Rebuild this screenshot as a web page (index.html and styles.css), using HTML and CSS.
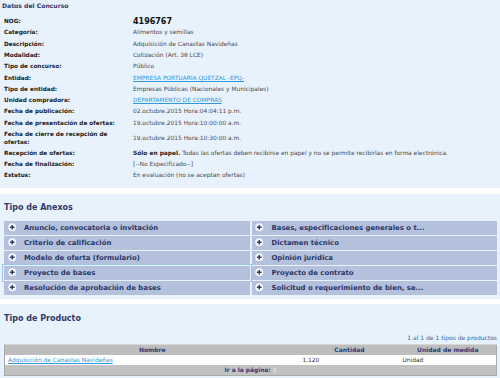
FILE: index.html
```html
<!DOCTYPE html>
<html lang="es">
<head>
    <meta charset="UTF-8">
    <title>Datos del Concurso</title>
    <link rel="stylesheet" href="styles.css">
</head>
<body>
    <section class="panel datos">
        <h2 class="datos-title">Datos del Concurso</h2>
        <table class="info">
            <tr><th>NOG:</th><td class="nog">4196767</td></tr>
            <tr><th>Categoría:</th><td>Alimentos y semillas</td></tr>
            <tr><th>Descripción:</th><td>Adquisición de Canastas Navideñas</td></tr>
            <tr><th>Modalidad:</th><td>Cotización (Art. 38 LCE)</td></tr>
            <tr><th>Tipo de concurso:</th><td>Público</td></tr>
            <tr><th>Entidad:</th><td><a href="#">EMPRESA PORTUARIA QUETZAL -EPQ-</a></td></tr>
            <tr><th>Tipo de entidad:</th><td>Empresas Públicas (Nacionales y Municipales)</td></tr>
            <tr><th>Unidad compradora:</th><td><a href="#">DEPARTAMENTO DE COMPRAS</a></td></tr>
            <tr><th>Fecha de publicación:</th><td>02.octubre.2015 Hora:04:04:11 p.m.</td></tr>
            <tr><th>Fecha de presentación de ofertas:</th><td>19.octubre.2015 Hora:10:00:00 a.m.</td></tr>
            <tr><th>Fecha de cierre de recepción de ofertas:</th><td>19.octubre.2015 Hora:10:30:00 a.m.</td></tr>
            <tr><th>Recepción de ofertas:</th><td><b>Sólo en papel.</b> Todas las ofertas deben recibirse en papel y no se permite recibirlas en forma electrónica.</td></tr>
            <tr><th>Fecha de finalización:</th><td>[--No Especificado--]</td></tr>
            <tr><th>Estatus:</th><td>En evaluación (no se aceptan ofertas)</td></tr>
        </table>
    </section>

    <section class="panel anexos">
        <h2 class="panel-title">Tipo de Anexos</h2>
        <ul class="annex-grid">
            <li class="annex-item"><svg class="plus" viewBox="0 0 10 10"><circle cx="5" cy="5" r="4.7" fill="#f4f6fb"/><path d="M5 2.3v5.4M2.3 5h5.4" stroke="#2f3a66" stroke-width="1.7"/></svg>Anuncio, convocatoria o invitación</li>
            <li class="annex-item"><svg class="plus" viewBox="0 0 10 10"><circle cx="5" cy="5" r="4.7" fill="#f4f6fb"/><path d="M5 2.3v5.4M2.3 5h5.4" stroke="#2f3a66" stroke-width="1.7"/></svg>Criterio de calificación</li>
            <li class="annex-item"><svg class="plus" viewBox="0 0 10 10"><circle cx="5" cy="5" r="4.7" fill="#f4f6fb"/><path d="M5 2.3v5.4M2.3 5h5.4" stroke="#2f3a66" stroke-width="1.7"/></svg>Modelo de oferta (formulario)</li>
            <li class="annex-item is-active"><svg class="plus" viewBox="0 0 10 10"><circle cx="5" cy="5" r="4.7" fill="#f4f6fb"/><path d="M5 2.3v5.4M2.3 5h5.4" stroke="#2f3a66" stroke-width="1.7"/></svg>Proyecto de bases</li>
            <li class="annex-item"><svg class="plus" viewBox="0 0 10 10"><circle cx="5" cy="5" r="4.7" fill="#f4f6fb"/><path d="M5 2.3v5.4M2.3 5h5.4" stroke="#2f3a66" stroke-width="1.7"/></svg>Resolución de aprobación de bases</li>
            <li class="annex-item"><svg class="plus" viewBox="0 0 10 10"><circle cx="5" cy="5" r="4.7" fill="#f4f6fb"/><path d="M5 2.3v5.4M2.3 5h5.4" stroke="#2f3a66" stroke-width="1.7"/></svg>Bases, especificaciones generales o t...</li>
            <li class="annex-item"><svg class="plus" viewBox="0 0 10 10"><circle cx="5" cy="5" r="4.7" fill="#f4f6fb"/><path d="M5 2.3v5.4M2.3 5h5.4" stroke="#2f3a66" stroke-width="1.7"/></svg>Dictamen técnico</li>
            <li class="annex-item"><svg class="plus" viewBox="0 0 10 10"><circle cx="5" cy="5" r="4.7" fill="#f4f6fb"/><path d="M5 2.3v5.4M2.3 5h5.4" stroke="#2f3a66" stroke-width="1.7"/></svg>Opinión jurídica</li>
            <li class="annex-item"><svg class="plus" viewBox="0 0 10 10"><circle cx="5" cy="5" r="4.7" fill="#f4f6fb"/><path d="M5 2.3v5.4M2.3 5h5.4" stroke="#2f3a66" stroke-width="1.7"/></svg>Proyecto de contrato</li>
            <li class="annex-item"><svg class="plus" viewBox="0 0 10 10"><circle cx="5" cy="5" r="4.7" fill="#f4f6fb"/><path d="M5 2.3v5.4M2.3 5h5.4" stroke="#2f3a66" stroke-width="1.7"/></svg>Solicitud o requerimiento de bien, se...</li>
        </ul>
    </section>

    <section class="panel productos">
        <h2 class="panel-title">Tipo de Producto</h2>
        <div class="pager-info">1 al 1 de 1 tipos de productos</div>
        <table class="products">
            <thead>
                <tr><th class="col-name">Nombre</th><th class="col-qty">Cantidad</th><th>Unidad de medida</th></tr>
            </thead>
            <tbody>
                <tr><td><a href="#">Adquisición de Canastas Navideñas</a></td><td>1,120</td><td>Unidad</td></tr>
            </tbody>
            <tfoot>
                <tr><td colspan="3">Ir a la página: <span class="page-num">1</span></td></tr>
            </tfoot>
        </table>
    </section>
</body>
</html>
```

FILE: styles.css
```css
:root {
    --panel: #e8f2fc;
    --navy: #2f3a68;
    --label: #1c1c1c;
    --value: #4a4a4a;
    --link: #2f97e0;
    --annex: #b3c1dc;
}

* {
    margin: 0;
    padding: 0;
    box-sizing: border-box;
}

body {
    font-family: "DejaVu Sans", Verdana, sans-serif;
    font-size: 5.9px;
    color: var(--value);
    background: #ffffff;
}

a {
    color: var(--link);
}

.panel {
    background: var(--panel);
    padding: 0 3px 0 4px;
}

.panel-title {
    font-size: 8px;
    line-height: 10px;
    font-weight: bold;
    color: var(--navy);
}

/* Datos del concurso */
.datos {
    padding-top: 2px;
    padding-bottom: 6px;
}

.datos-title {
    font-size: 6.1px;
    line-height: 8px;
    font-weight: bold;
    color: var(--navy);
    margin-left: -2px;
    margin-bottom: 6.3px;
}

.info {
    border-collapse: collapse;
    width: 100%;
}

.info th,
.info td {
    line-height: 7.5px;
    padding: 1.9px 0;
    vertical-align: middle;
    text-align: left;
}

.info th {
    width: 129px;
    padding-right: 6px;
    font-size: 5.75px;
    color: var(--label);
}

.info td b {
    color: #222;
}

.info .nog {
    font-size: 8px;
    font-weight: bold;
    color: #111;
}

/* Tipo de anexos */
.anexos {
    margin-top: 6px;
    padding-top: 9px;
    padding-bottom: 4px;
}

.anexos .panel-title {
    margin-bottom: 8px;
}

.annex-grid {
    list-style: none;
    display: grid;
    grid-template-columns: 1fr 1fr;
    grid-template-rows: repeat(5, 14px);
    grid-auto-flow: column;
    column-gap: 2px;
    row-gap: 1px;
}

.annex-item {
    display: flex;
    align-items: center;
    gap: 8px;
    padding-left: 3.5px;
    background: var(--annex);
    font-size: 6.9px;
    font-weight: bold;
    color: #2b3566;
    white-space: nowrap;
    overflow: hidden;
}

.annex-item.is-active {
    outline: 1px solid #9cc4ec;
    outline-offset: 1px;
}

.plus {
    width: 8.5px;
    height: 8.5px;
    flex-shrink: 0;
}

/* Tipo de producto */
.productos {
    margin-top: 5px;
    padding-top: 10px;
    padding-bottom: 3px;
}

.pager-info {
    margin-top: 10.6px;
    margin-bottom: 1.4px;
    text-align: right;
    font-size: 6px;
    line-height: 8px;
    color: #3a6496;
}

.products {
    width: 100%;
    border-collapse: collapse;
    border: 1px solid #a9a9a9;
}

.products th {
    height: 11px;
    background: #bdbdbd;
    border-top: 1px solid #d6d6d6;
    font-size: 6px;
    color: #2e3b78;
    text-align: center;
}

.products .col-name {
    width: 295px;
}

.products .col-qty {
    width: 100px;
}

.products tbody td {
    height: 10px;
    background: #ffffff;
    padding-left: 3px;
    color: #333;
}

.products tfoot td {
    height: 10px;
    background: #c2c2c2;
    text-align: center;
    font-weight: bold;
    color: #2e3b78;
}

.page-num {
    color: #f2f2f2;
    font-weight: normal;
}
```
